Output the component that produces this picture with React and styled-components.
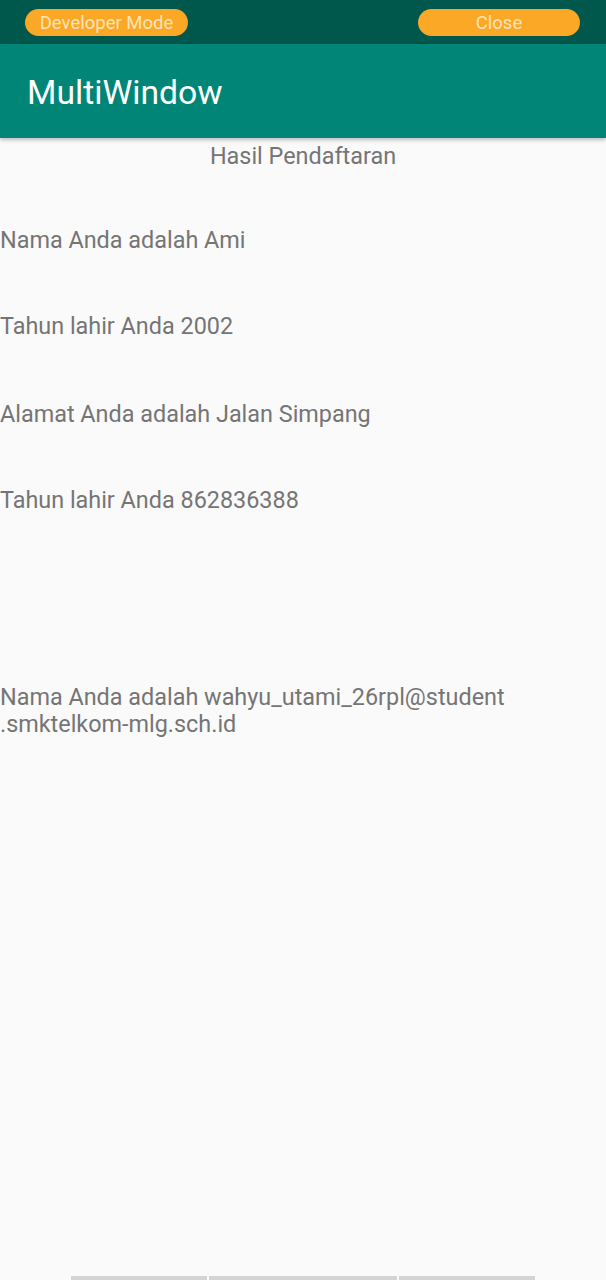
import React from "react";
import styled, { createGlobalStyle } from "styled-components";

const Global = createGlobalStyle`
  html, body { margin: 0; padding: 0; background: #fafafa; }
  body { font-family: Roboto, "Noto Sans", sans-serif; }
`;

const Page = styled.div`
  width: 606px;
  height: 1280px;
  display: flex;
  flex-direction: column;
  background: #fafafa;
  overflow: hidden;
`;

const StatusBar = styled.div`
  height: 44px;
  background: #00574b;
  display: flex;
  align-items: center;
  justify-content: space-between;
  padding: 0 26px 0 25px;
  box-sizing: border-box;
`;

const Pill = styled.div`
  width: ${(p) => p.$w}px;
  height: 27px;
  border-radius: 14px;
  background: #fba826;
  color: #ffe3b8;
  font-size: 18.5px;
  display: flex;
  align-items: center;
  justify-content: center;
  margin-top: 1px;
`;

const AppBar = styled.div`
  height: 94px;
  background: #008577;
  display: flex;
  align-items: center;
  padding-left: 27px;
  box-shadow: 0 2px 4px rgba(0, 0, 0, 0.25);
  position: relative;
  z-index: 1;
`;

const Title = styled.div`
  color: #ffffff;
  font-size: 33.7px;
  margin-top: 2px;
`;

const Content = styled.div`
  flex: 1;
  display: flex;
  flex-direction: column;
`;

const Line = styled.div`
  font-size: 23.4px;
  line-height: 27px;
  color: #757575;
  margin-top: ${(p) => p.$top}px;
  text-align: ${(p) => (p.$center ? "center" : "left")};
`;

const NavHint = styled.div`
  display: flex;
  gap: 2px;
  padding-left: 71px;
  height: 4px;
`;

const NavSeg = styled.div`
  width: ${(p) => p.$w}px;
  background: #d4d4d4;
`;

export default function App() {
  return (
    <>
      <Global />
      <Page>
        <StatusBar>
          <Pill $w={163}>Developer Mode</Pill>
          <Pill $w={162}>Close</Pill>
        </StatusBar>
        <AppBar>
          <Title>MultiWindow</Title>
        </AppBar>
        <Content>
          <Line $center $top={5}>Hasil Pendaftaran</Line>
          <Line $top={57}>Nama Anda adalah Ami</Line>
          <Line $top={59}>Tahun lahir Anda 2002</Line>
          <Line $top={61}>Alamat Anda adalah Jalan Simpang</Line>
          <Line $top={59}>Tahun lahir Anda 862836388</Line>
          <Line $top={170}>
            Nama Anda adalah wahyu_utami_26rpl@student
            <br />
            .smktelkom-mlg.sch.id
          </Line>
        </Content>
        <NavHint>
          <NavSeg $w={136} />
          <NavSeg $w={188} />
          <NavSeg $w={136} />
        </NavHint>
      </Page>
    </>
  );
}
